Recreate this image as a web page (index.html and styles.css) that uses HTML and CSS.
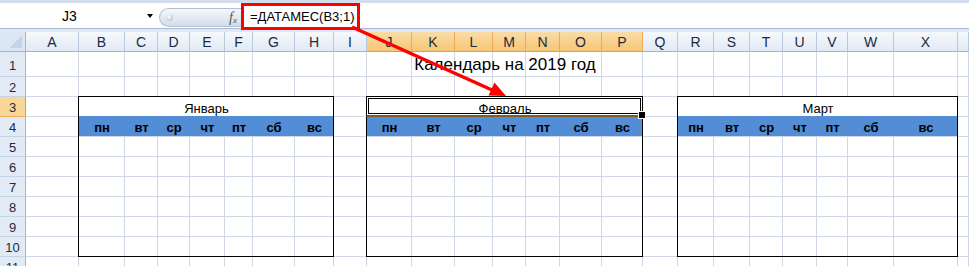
FILE: index.html
```html
<!DOCTYPE html>
<html lang="ru">
<head>
    <meta charset="UTF-8">
    <title>Календарь на 2019 год</title>
    <link rel="stylesheet" href="styles.css">
</head>
<body>
    <div class="formula-bar">
        <div class="name-box">
            <span class="ref">J3</span>
            <span class="drop"></span>
        </div>
        <div class="splitter">
            <span class="knob"></span>
            <span class="fx">f<sub>x</sub></span>
        </div>
        <div class="formula">=ДАТАМЕС(B3;1)</div>
    </div>
    <div class="bar-gap"></div>

    <div class="sheet" id="sheet">
        <div class="title">Календарь на 2019 год</div>

        <div class="month-title jan">Январь</div>
        <div class="days jan"><span>пн</span><span>вт</span><span>ср</span><span>чт</span><span>пт</span><span>сб</span><span>вс</span></div>
        <div class="frame jan"></div>

        <div class="month-title feb">Февраль</div>
        <div class="days feb"><span>пн</span><span>вт</span><span>ср</span><span>чт</span><span>пт</span><span>сб</span><span>вс</span></div>
        <div class="frame feb"></div>
        <div class="selection feb"></div>

        <div class="month-title mar">Март</div>
        <div class="days mar"><span>пн</span><span>вт</span><span>ср</span><span>чт</span><span>пт</span><span>сб</span><span>вс</span></div>
        <div class="frame mar"></div>
    </div>

    <svg class="pointer" width="969" height="266" viewBox="0 0 969 266">
        <line x1="352" y1="27" x2="492" y2="90" stroke="#f00" stroke-width="3.5"/>
        <polygon points="506,96 488.5,95.5 494.5,82.5" fill="#f00"/>
    </svg>

    <script>
    // the last column (Y) is cut by the window, its letter is off screen
    const letters = "ABCDEFGHIJKLMNOPQRSTUVWX ".split("");
    const selCols = "JKLMNOP";
    const sheet = document.getElementById("sheet");
    const frag = document.createDocumentFragment();

    for (let r = 0; r < 12; r++) {
        for (let c = 0; c < 26; c++) {
            const el = document.createElement("div");
            if (r === 0 && c === 0) {
                el.className = "corner";
            } else if (r === 0) {
                el.className = "col-head" + (selCols.includes(letters[c - 1]) ? " sel" : "");
                el.textContent = letters[c - 1].trim();
            } else if (c === 0) {
                el.className = "row-head" + (r === 3 ? " sel" : "");
                el.textContent = r;
            } else {
                el.className = "cell";
            }
            el.style.gridRow = r + 1;
            el.style.gridColumn = c + 1;
            frag.appendChild(el);
        }
    }
    sheet.prepend(frag);
    </script>
</body>
</html>
```

FILE: styles.css
```css
* {
    box-sizing: border-box;
}

html, body {
    margin: 0;
    padding: 0;
    background-color: white;
    font-family: "Liberation Sans", Arial, sans-serif;
    overflow: hidden;
}

body {
    width: 969px;
    height: 266px;
    position: relative;
}

/* formula bar */
.formula-bar {
    display: flex;
    height: 29px;
    border-top: 3px solid #d3deec;
    border-bottom: 1px solid #a7b8ce;
    background-color: white;
}

.name-box {
    width: 156px;
    display: flex;
    align-items: center;
    font-size: 14px;
    color: black;
}

.name-box .ref {
    flex: 1;
    text-align: center;
    padding-right: 8px;
}

.drop {
    width: 0;
    height: 0;
    border-left: 3px solid transparent;
    border-right: 3px solid transparent;
    border-top: 4px solid black;
    margin-right: 3px;
}

.splitter {
    width: 82px;
    height: 19px;
    margin: 5px 0 0 3px;
    padding: 0 4px 0 6px;
    display: flex;
    align-items: center;
    justify-content: space-between;
    border: 1px solid #b1c0d3;
    border-right: none;
    border-radius: 10px 0 0 10px;
    background: linear-gradient(#f5f8fb, #d2dcea);
}

.knob {
    width: 7px;
    height: 7px;
    border-radius: 50%;
    background: radial-gradient(circle at 40% 35%, #ffffff, #a9b6c7);
}

.fx {
    font-family: "Liberation Serif", serif;
    font-style: italic;
    font-size: 14px;
    color: #555;
    line-height: 1;
}

.fx sub {
    font-size: 9px;
    vertical-align: -1px;
}

.formula {
    width: 119px;
    margin-bottom: -2px;
    padding: 0 0 0 6px;
    display: flex;
    align-items: center;
    border: 3px solid #f00;
    font-size: 13px;
    color: black;
}

.bar-gap {
    height: 3px;
    background-color: #dfe8f4;
}

/* sheet grid */
.sheet {
    display: grid;
    grid-template-columns: 26px 53px 46px 33px 32px 35px 28px 42px 39px 33px 45px 43px 38px 33px 34px 42px 41px 35px 36px 36px 33px 34px 31px 46px 64px 1fr;
    grid-template-rows: 20px 25px repeat(10, 20px);
}

.cell {
    border-right: 1px solid #d0d7e5;
    border-bottom: 1px solid #d0d7e5;
}

.corner {
    border-right: 1px solid #9eb6ce;
    border-bottom: 1px solid #9eb6ce;
    background: linear-gradient(135deg, transparent 50%, #c3d4ea 50%) no-repeat right 3px bottom 3px / 12px 12px, #dde7f3;
}

.col-head {
    display: flex;
    align-items: center;
    justify-content: center;
    font-size: 14px;
    color: #1c2a3f;
    border-right: 1px solid #b9c9dc;
    border-bottom: 1px solid #9eb6ce;
    background: linear-gradient(#f6f9fc, #e1e9f4);
}

.col-head.sel {
    border-right-color: #f0ab52;
    border-bottom-color: #f29536;
    background: linear-gradient(#f9dca6, #f5c676);
}

.row-head {
    display: flex;
    align-items: center;
    justify-content: center;
    padding-top: 2px;
    font-size: 13px;
    color: #1c2a3f;
    border-right: 1px solid #9eb6ce;
    border-bottom: 1px solid #c5d3e6;
    background-color: #e2eaf5;
}

.row-head.sel {
    border-right-color: #f29536;
    border-bottom-color: #f1b15a;
    background-color: #f9d797;
}

/* calendar blocks */
.jan { grid-column: 3 / 10; }
.feb { grid-column: 11 / 18; }
.mar { grid-column: 19 / 26; }

.title {
    grid-row: 2;
    grid-column: 11 / 18;
    display: flex;
    align-items: center;
    justify-content: center;
    font-size: 17px;
    color: black;
}

.month-title {
    grid-row: 4;
    display: flex;
    align-items: center;
    justify-content: center;
    padding-top: 2px;
    font-size: 13px;
    color: black;
    background-color: white;
}

.days {
    grid-row: 5;
    margin: -1px 0 1px;
    display: grid;
    align-items: center;
    padding-top: 2px;
    font-size: 13px;
    font-weight: bold;
    color: black;
    text-align: center;
    background-color: #538dd5;
}

.days.jan { grid-template-columns: 46px 33px 32px 35px 28px 42px 39px; }
.days.feb { grid-template-columns: 45px 43px 38px 33px 34px 42px 41px; }
.days.mar { grid-template-columns: 36px 36px 33px 34px 31px 46px 64px; }

.frame {
    grid-row: 4 / 12;
    margin: -1px 0 0 -1px;
    border: 1px solid black;
}

.selection {
    grid-row: 4;
    margin: -1px 0 0 -1px;
    position: relative;
    border: 1px solid black;
    border-bottom: 2px solid #7d5c2c;
    box-shadow: inset 0 0 0 1px white, inset 0 0 0 2px black;
}

.selection::after {
    content: "";
    position: absolute;
    right: -4px;
    bottom: -4px;
    width: 6px;
    height: 6px;
    background-color: black;
    border: 1px solid white;
}

/* annotation arrow */
.pointer {
    position: absolute;
    top: 0;
    left: 0;
    pointer-events: none;
}
```
